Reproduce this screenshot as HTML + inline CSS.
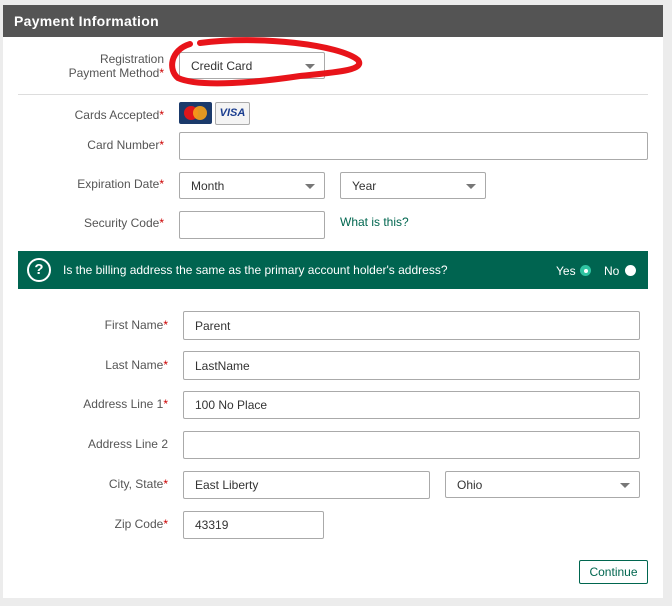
<!DOCTYPE html>
<html><head><style>
body{margin:0;width:672px;height:606px;background:#ececec;font-family:"Liberation Sans",sans-serif;position:relative;overflow:hidden}
.p{position:absolute;left:3px;top:5px;width:660px;height:593px;background:#fff}
.h{position:absolute;left:3px;top:5px;width:660px;height:32px;background:#545454;color:#fff;font-weight:bold;font-size:14px;line-height:32px;text-indent:11px;letter-spacing:.3px}
.l{position:absolute;font-size:12px;color:#555;text-align:right;width:200px}
.l b{color:#c00;font-weight:normal}
.i{position:absolute;border:1px solid #aaa;border-radius:2px;background:#fff;box-sizing:border-box;font-size:12px;color:#333;padding-left:11px;display:flex;align-items:center}
.s:after{content:"";position:absolute;right:9px;top:50%;margin-top:-2px;border-left:5px solid transparent;border-right:5px solid transparent;border-top:5px solid #777}
</style></head><body>
<div class="p"></div>
<div class="h">Payment Information</div>
<div class="l" style="left:-36px;top:52px;line-height:14px">Registration<br>Payment Method<b>*</b></div>
<div class="i s" style="left:179px;top:52px;width:146px;height:27px">Credit Card</div>
<div style="position:absolute;left:18px;top:94px;width:630px;height:1px;background:#ddd"></div>
<div class="l" style="left:-36px;top:108px">Cards Accepted<b>*</b></div>
<div style="position:absolute;left:179px;top:102px;width:33px;height:22px;background:#1b3a6b;border-radius:2px"><div style="position:absolute;left:5px;top:4px;width:14px;height:14px;border-radius:50%;background:#e0161b"></div><div style="position:absolute;left:14px;top:4px;width:14px;height:14px;border-radius:50%;background:#f7a21b;opacity:.9"></div></div>
<div style="position:absolute;left:215px;top:102px;width:33px;height:21px;border:1px solid #aaa;border-radius:2px;background:#f4f4f4;color:#1a3d8f;font-weight:bold;font-style:italic;font-size:11px;text-align:center;line-height:21px">VISA</div>
<div class="l" style="left:-36px;top:138px">Card Number<b>*</b></div>
<div class="i" style="left:179px;top:132px;width:469px;height:28px"></div>
<div class="l" style="left:-36px;top:177px">Expiration Date<b>*</b></div>
<div class="i s" style="left:179px;top:172px;width:146px;height:27px">Month</div>
<div class="i s" style="left:340px;top:172px;width:146px;height:27px">Year</div>
<div class="l" style="left:-36px;top:216px">Security Code<b>*</b></div>
<div class="i" style="left:179px;top:211px;width:146px;height:28px"></div>
<div style="position:absolute;left:340px;top:215px;font-size:12px;color:#00664f">What is this?</div>
<div style="position:absolute;left:18px;top:251px;width:630px;height:38px;background:#006450;color:#fff;font-size:12px">
<div style="position:absolute;left:9px;top:7px;width:20px;height:20px;border:2px solid #fff;border-radius:50%;text-align:center;line-height:20px;font-weight:bold;font-size:15px">?</div>
<div style="position:absolute;left:45px;top:12px">Is the billing address the same as the primary account holder's address?</div>
<div style="position:absolute;left:538px;top:13px">Yes</div>
<div style="position:absolute;left:562px;top:14px;width:11px;height:11px;border-radius:50%;background:#2fc4a2"><div style="margin:3.5px;width:4px;height:4px;border-radius:50%;background:#fff"></div></div>
<div style="position:absolute;left:586px;top:13px">No</div>
<div style="position:absolute;left:607px;top:14px;width:11px;height:11px;border-radius:50%;background:#fff"></div>
</div>
<div class="l" style="left:-32px;top:318px">First Name<b>*</b></div>
<div class="i" style="left:183px;top:311px;width:457px;height:29px">Parent</div>
<div class="l" style="left:-32px;top:358px">Last Name<b>*</b></div>
<div class="i" style="left:183px;top:351px;width:457px;height:29px">LastName</div>
<div class="l" style="left:-32px;top:397px">Address Line 1<b>*</b></div>
<div class="i" style="left:183px;top:391px;width:457px;height:28px">100 No Place</div>
<div class="l" style="left:-32px;top:437px">Address Line 2</div>
<div class="i" style="left:183px;top:431px;width:457px;height:28px"></div>
<div class="l" style="left:-32px;top:477px">City, State<b>*</b></div>
<div class="i" style="left:183px;top:471px;width:247px;height:28px">East Liberty</div>
<div class="i s" style="left:445px;top:471px;width:195px;height:27px">Ohio</div>
<div class="l" style="left:-32px;top:517px">Zip Code<b>*</b></div>
<div class="i" style="left:183px;top:511px;width:141px;height:28px">43319</div>
<div style="position:absolute;left:579px;top:560px;width:69px;height:24px;border:1px solid #00664f;border-radius:2px;box-sizing:border-box;color:#00664f;font-size:12px;text-align:center;line-height:22px">Continue</div>
<svg style="position:absolute;left:0;top:0" width="672" height="606"><path d="M200 43 C260 35 340 45 358 60 C365 70 340 72 300 76 C260 82 200 88 178 78 C168 70 170 50 190 44" fill="none" stroke="#e8141a" stroke-width="6" stroke-linecap="round"/></svg>
</body></html>
